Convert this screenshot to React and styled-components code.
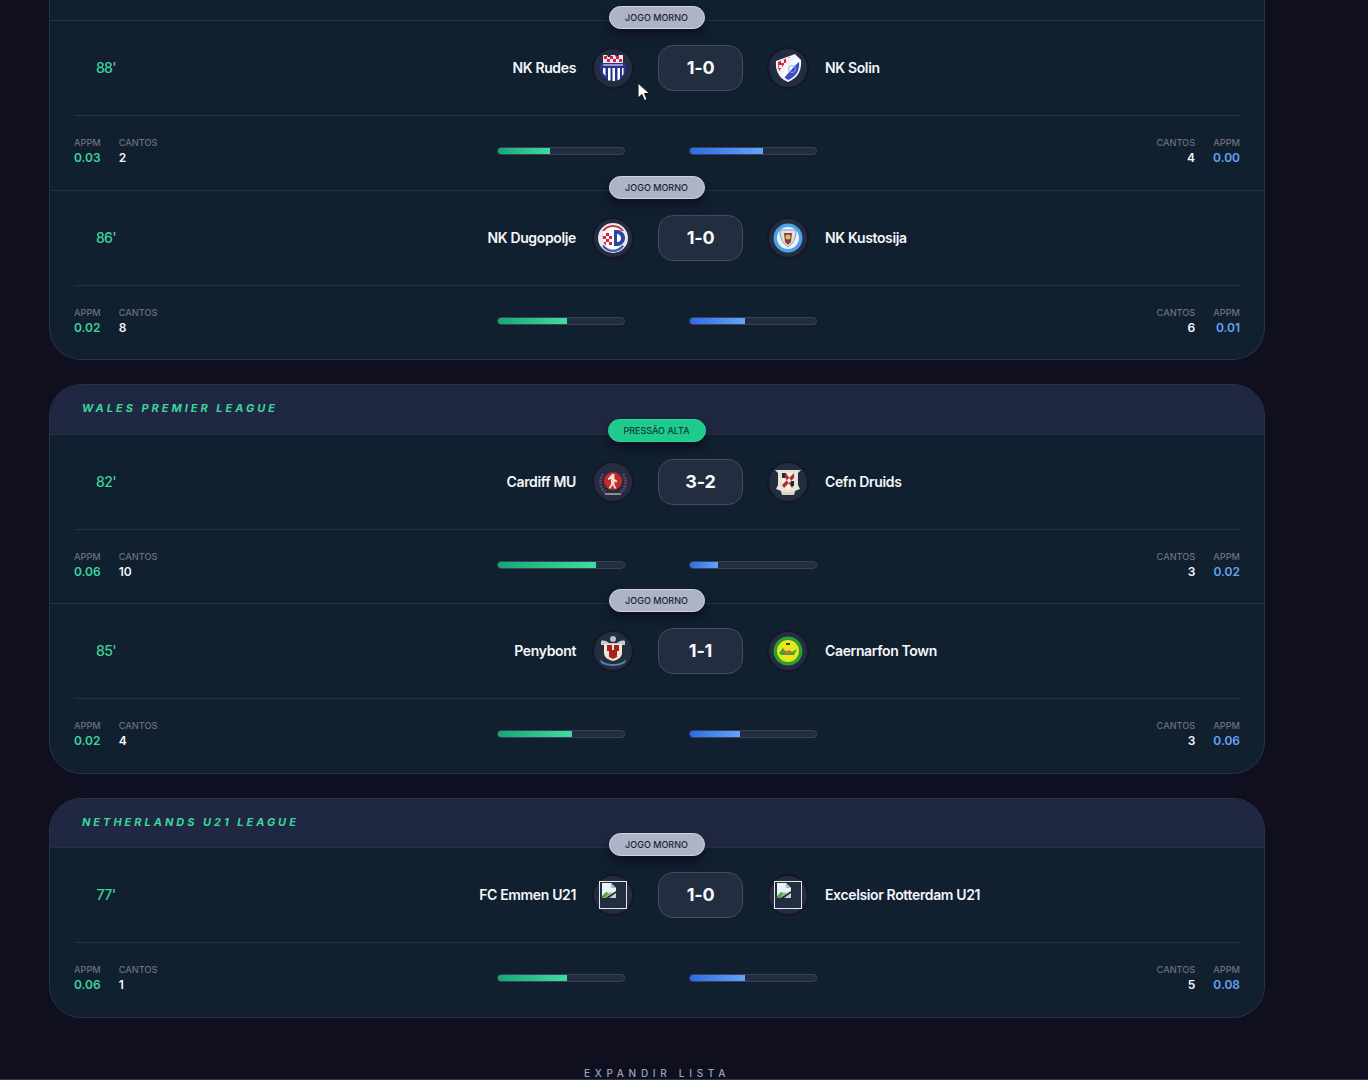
import React from "react";
import styled, { createGlobalStyle } from "styled-components";

const Global = createGlobalStyle`
  html, body { margin: 0; padding: 0; height: 1080px; overflow: hidden; background: #0f0f1f; }
  body { font-family: Inter, "Liberation Sans", sans-serif; -webkit-font-smoothing: antialiased; }
  * { box-sizing: border-box; }
`;

const Page = styled.main`
  position: relative;
  width: 1368px;
  height: 1080px;
  overflow: hidden;
  padding: 0 103px 0 49px;
  display: flex;
  flex-direction: column;
  border-bottom: 1px solid #2c3a40;
`;

const Card = styled.section`
  background: #10202f;
  border: 1px solid #2a3345;
  border-top: ${(p) => (p.$clipped ? "0" : "1px solid #2a3345")};
  border-radius: ${(p) => (p.$clipped ? "0 0 32px 32px" : "32px")};
  margin-bottom: 24px;
  padding-top: ${(p) => (p.$clipped ? "20px" : "0")};
  flex: none;
`;

const CardHeader = styled.header`
  height: ${(p) => p.$h ?? 49}px;
  padding-left: 32px;
  padding-bottom: ${(p) => (p.$h ? "2px" : "3px")};
  display: flex;
  align-items: center;
  background: #202743;
  border-radius: 31px 31px 0 0;
  font-size: 11px;
  font-weight: 700;
  font-style: italic;
  letter-spacing: 2.98px;
  color: #3ad69d;
  text-transform: uppercase;
`;

const Match = styled.article`
  position: relative;
  border-top: 1px solid #243243;
`;

const Pill = styled.span`
  position: absolute;
  top: ${(p) => (p.$hot ? "-16px" : "-15px")};
  left: 50%;
  transform: translateX(-50%);
  width: ${(p) => (p.$hot ? "98px" : "96px")};
  height: 23px;
  padding: 0 1px 1px 0;
  display: flex;
  align-items: center;
  justify-content: center;
  border-radius: 999px;
  font-size: 9px;
  font-weight: 500;
  text-transform: uppercase;
  color: ${(p) => (p.$hot ? "#0d3a3a" : "#1c2235")};
  background: ${(p) => (p.$hot ? "#1fcb8c" : "#aeb4c6")};
  border: 1px solid ${(p) => (p.$hot ? "#2bd699" : "#d0d4e0")};
  box-shadow: 0 6px 10px rgba(13, 12, 30, 0.75);
  z-index: 2;
`;

const MainRow = styled.div`
  display: grid;
  grid-template-columns: 64px 472px 85px 1fr;
  column-gap: 24px;
  align-items: center;
  margin: 0 24px;
  padding: 24px 0;
  border-bottom: 1px solid #2a3040;
`;

const Minute = styled.span`
  font-size: 14px;
  line-height: 16px;
  font-weight: 500;
  color: #3fd39b;
  text-align: center;
  letter-spacing: -0.6px;
`;

const Team = styled.div`
  display: flex;
  align-items: center;
  gap: 16px;
  justify-content: ${(p) => (p.$home ? "flex-end" : "flex-start")};
`;

const TeamName = styled.span`
  font-size: 14px;
  line-height: 16px;
  padding-bottom: 1px;
  font-weight: 600;
  color: #f4f6fa;
  letter-spacing: -0.36px;
  white-space: nowrap;
`;

const Badge = styled.span`
  width: 42px;
  height: 42px;
  flex: none;
  border-radius: 50%;
  background: #222d40;
  border: 2px solid #17152a;
  display: flex;
  align-items: center;
  justify-content: center;
`;

const Score = styled.div`
  height: 46px;
  padding-bottom: 1px;
  border-radius: 15px;
  background: #222d40;
  border: 1px solid #474a63;
  display: flex;
  align-items: center;
  justify-content: center;
  font-size: 18px;
  font-weight: 700;
  letter-spacing: -0.2px;
  color: #f6f8fb;
`;

const StatsRow = styled.div`
  display: grid;
  grid-template-columns: 1fr auto 1fr;
  align-items: start;
  height: ${(p) => p.$h ?? 73}px;
  padding: 21px 24px 0;
`;

const StatGroup = styled.div`
  display: flex;
  gap: 18px;
  justify-content: ${(p) => (p.$end ? "flex-end" : "flex-start")};
`;

const Stat = styled.div`
  display: flex;
  flex-direction: column;
  align-items: ${(p) => (p.$end ? "flex-end" : "flex-start")};
`;

const StatLabel = styled.span`
  font-size: 9.2px;
  line-height: 12px;
  margin-bottom: 1px;
  font-weight: 500;
  color: #6d6d85;
`;

const StatValue = styled.span`
  font-size: 12px;
  line-height: 16px;
  font-weight: 600;
  color: ${(p) => (p.$tone === "green" ? "#3fd39b" : p.$tone === "blue" ? "#66a3f5" : "#f4f6fa")};
`;

const Bars = styled.div`
  display: flex;
  gap: 64px;
  margin-top: 10px;
`;

const Track = styled.div`
  width: 128px;
  height: 8px;
  border-radius: 999px;
  background: #222d40;
  border: 1px solid #3a4156;
  overflow: hidden;
`;

const Fill = styled.div`
  height: 100%;
  background: ${(p) =>
    p.$side === "home"
      ? "linear-gradient(90deg, #15a874, #3fdca2)"
      : "linear-gradient(90deg, #2f6be8, #63a4f8)"};
`;

const Expand = styled.div`
  margin-top: 25px;
  text-align: center;
  font-size: 10px;
  line-height: 12px;
  font-weight: 500;
  letter-spacing: 4.72px;
  color: #97a3b8;
  text-transform: uppercase;
`;

const Cursor = styled.svg`
  position: absolute;
  left: 637px;
  top: 82px;
  z-index: 5;
`;

const Rudes = () => (
  <svg width="28" height="28" viewBox="0 0 28 28">
    <path d="M4 1h4l1 2h2l1-2h4l1 2h2l1-2h4v8H4z" fill="#e8e8ee" />
    <path d="M5 2h3v3H5zM11 2h3v3h-3zM17 2h3v3h-3zM8 5h3v3H8zM14 5h3v3h-3zM20 5h3v3h-3z" fill="#d8213a" />
    <path d="M1 9h26v6c0 6-5 11-13 12C6 26 1 21 1 15z" fill="#28318f" />
    <path d="M4 10.500h20v1H4z" fill="#fff" />
    <path d="M4 14h2.500v8L4 19zM9 14h2.500v12.500H9zM13.500 14H16v13h-2.500zM18.500 14H21v11l-2.500 1.500zM23 14h1.500v6L23 22z" fill="#fff" />
  </svg>
);

const Solin = () => (
  <svg width="30" height="30" viewBox="0 0 30 30">
    <path d="M3 8 22 1l6 6c1 10-3 18-13 22C6 26 2 17 3 8z" fill="#f2f3f8" />
    <path d="M5 9 17 4 6 18C5 15 5 12 5 9z" fill="#d8213a" />
    <path d="M8 7h3v3H8zM13 5h3v3h-3zM6 12h3v3H6zM11 10h3v3h-3z" fill="#f2f3f8" />
    <path d="M26 9c1 8-3 15-11 18-2-1-4-3-5-5z" fill="#3b4cc0" />
    <path d="M8 22 24 4l3 3L11 25z" fill="#fbfbff" />
    <circle cx="19" cy="16" r="3.500" fill="none" stroke="#8fa0f0" strokeWidth="1" />
  </svg>
);

const Dugopolje = () => (
  <svg width="32" height="32" viewBox="0 0 32 32">
    <circle cx="16" cy="16" r="15" fill="#e9e9ef" />
    <path d="M5 9a13 13 0 0 1 22 0z" fill="#c93a3a" />
    <circle cx="16" cy="16" r="11" fill="#fff" />
    <path d="M6 11h9v12H8c-2-3-3-7-2-12z" fill="#d8213a" />
    <path d="M6 11h3v3H6zM12 11h3v3h-3zM9 14h3v3H9zM6 17h3v3H6zM12 17h3v3h-3zM9 20h3v3H9z" fill="#fff" />
    <path d="M17 8h4c5 1 7 5 7 8s-2 7-7 8h-4z" fill="#2846a8" />
    <path d="M20 12h1c2 1 3 2 3 4s-1 4-3 4h-1z" fill="#fff" />
    <path d="M5 24a13 13 0 0 0 22 0l-2-1a11 11 0 0 1-18 0z" fill="#3a5fb0" />
  </svg>
);

const Kustosija = () => (
  <svg width="30" height="30" viewBox="0 0 30 30">
    <circle cx="15" cy="15" r="14.500" fill="#4da3e8" />
    <circle cx="15" cy="15" r="11" fill="#eef3fa" />
    <path d="M7 7h16c0 8-3 14-8 17C10 21 7 15 7 7z" fill="#dfe3ee" stroke="#8a93a8" strokeWidth="1" />
    <path d="M11 10h8l-1 9-3 3-3-3z" fill="#8c3a36" />
    <circle cx="15" cy="14" r="2.500" fill="#d8c25a" />
  </svg>
);

const Cardiff = () => (
  <svg width="32" height="32" viewBox="0 0 32 32">
    <path d="M6 8c-4 6-3 14 2 18M26 8c4 6 3 14-2 18" fill="none" stroke="#6b3c6d" strokeWidth="3" strokeDasharray="2 1" />
    <circle cx="16" cy="15" r="9" fill="#c62a26" />
    <path d="M15 8h2.500v5l3 2-1 1.500-2-1v3l2 4h-2l-2-3.500-2 3.500h-2l2.500-4.500v-5l-3 1v-1.500z" fill="#f0ddd0" />
    <path d="M8 27h16v2H8z" fill="#8d8a90" />
  </svg>
);

const Druids = () => (
  <svg width="30" height="30" viewBox="0 0 30 30">
    <path d="M2 3h26l-3 3v12l2 4-5 2-1 4H9l-1-4-5-2 2-4V6z" fill="#e8e4da" />
    <path d="M9 6h12v14l-6 3-6-3z" fill="#f4f1e8" />
    <path d="M9 6h4l8 12-2 3zM21 6l-12 12 2 3 10-10z" fill="#b92a2a" />
    <path d="M9 6h3v5H9zM18 14h3v5h-3z" fill="#2a2a2e" />
    <path d="M9 25h12v3H9z" fill="#d8d4c8" />
  </svg>
);

const Penybont = () => (
  <svg width="30" height="32" viewBox="0 0 30 32">
    <circle cx="15" cy="4" r="3" fill="#b8bcc8" />
    <path d="M3 6c3-1 6 0 8 2h8c2-2 5-3 8-2v4H3z" fill="#c8ccd6" />
    <path d="M6 9h18v9c0 4-4 7-9 8-5-1-9-4-9-8z" fill="#efe6d2" />
    <path d="M9 10h5v6H9zM16 10h5v6h-5zM11 15h8v7l-4 2-4-2z" fill="#a8201f" />
    <path d="M2 24c3 4 8 5 13 5s10-1 13-5l-1 4c-3 2-8 3-12 3s-9-1-12-3z" fill="#4f86a8" />
  </svg>
);

const Caernarfon = () => (
  <svg width="30" height="30" viewBox="0 0 30 30">
    <circle cx="15" cy="15" r="14.500" fill="#2f9e2e" />
    <circle cx="15" cy="15" r="11" fill="#e6e81e" />
    <path d="M6 17l4-5 3 4 3-2 3 2 5-3-3 6H8z" fill="#3fa03a" />
    <path d="M12 15h6v3h-6z" fill="#d8623a" />
    <path d="M13 7h4v2h-4z" fill="#3a3a20" />
  </svg>
);

const Broken = () => (
  <svg width="28" height="28" viewBox="0 0 28 28">
    <rect x="0.500" y="0.500" width="27" height="27" fill="none" stroke="#e6e8ee" />
    <path d="M3 2h9l5 5v3L6 17H3z" fill="#eaf1f6" />
    <path d="M12 2v5h5z" fill="#aeb9c0" />
    <path d="M3 17v-2l4-4 3 1-4 5z" fill="#5aa34a" />
    <path d="M6 17l4-5 3-1-2 3z" fill="#86bf72" />
    <path d="M17 12v5h-7z" fill="#c8d2d0" />
  </svg>
);

const matches = {
  rudes: { pill: "Jogo morno", min: "88'", home: "NK Rudes", away: "NK Solin", H: Rudes, A: Solin, score: "1-0", s: ["0.03", "2", "4", "0.00"], bars: [41, 58] },
  dugo: { pill: "Jogo morno", min: "86'", home: "NK Dugopolje", away: "NK Kustosija", H: Dugopolje, A: Kustosija, score: "1-0", s: ["0.02", "8", "6", "0.01"], bars: [55, 44] },
  cardiff: { pill: "Pressão alta", hot: true, min: "82'", home: "Cardiff MU", away: "Cefn Druids", H: Cardiff, A: Druids, score: "3-2", s: ["0.06", "10", "3", "0.02"], bars: [78, 22] },
  peny: { pill: "Jogo morno", min: "85'", home: "Penybont", away: "Caernarfon Town", H: Penybont, A: Caernarfon, score: "1-1", s: ["0.02", "4", "3", "0.06"], bars: [59, 40] },
  emmen: { pill: "Jogo morno", min: "77'", home: "FC Emmen U21", away: "Excelsior Rotterdam U21", H: Broken, A: Broken, score: "1-0", s: ["0.06", "1", "5", "0.08"], bars: [55, 44] },
};

function MatchBlock({ m, statsH }) {
  const { H, A } = m;
  return (
    <Match>
      <Pill $hot={m.hot}>{m.pill}</Pill>
      <MainRow>
        <Minute>{m.min}</Minute>
        <Team $home>
          <TeamName>{m.home}</TeamName>
          <Badge><H /></Badge>
        </Team>
        <Score>{m.score}</Score>
        <Team>
          <Badge><A /></Badge>
          <TeamName>{m.away}</TeamName>
        </Team>
      </MainRow>
      <StatsRow $h={statsH}>
        <StatGroup>
          <Stat>
            <StatLabel>APPM</StatLabel>
            <StatValue $tone="green">{m.s[0]}</StatValue>
          </Stat>
          <Stat>
            <StatLabel>CANTOS</StatLabel>
            <StatValue>{m.s[1]}</StatValue>
          </Stat>
        </StatGroup>
        <Bars>
          <Track><Fill $side="home" style={{ width: `${m.bars[0]}%` }} /></Track>
          <Track><Fill $side="away" style={{ width: `${m.bars[1]}%` }} /></Track>
        </Bars>
        <StatGroup $end>
          <Stat $end>
            <StatLabel>CANTOS</StatLabel>
            <StatValue>{m.s[2]}</StatValue>
          </Stat>
          <Stat $end>
            <StatLabel>APPM</StatLabel>
            <StatValue $tone="blue">{m.s[3]}</StatValue>
          </Stat>
        </StatGroup>
      </StatsRow>
    </Match>
  );
}

export default function App() {
  return (
    <Page>
      <Global />
      <Card $clipped>
        <MatchBlock m={matches.rudes} statsH={74} />
        <MatchBlock m={matches.dugo} />
      </Card>
      <Card>
        <CardHeader>Wales Premier League</CardHeader>
        <MatchBlock m={matches.cardiff} />
        <MatchBlock m={matches.peny} statsH={74} />
      </Card>
      <Card>
        <CardHeader $h={48}>Netherlands U21 League</CardHeader>
        <MatchBlock m={matches.emmen} statsH={74} />
      </Card>
      <Expand>Expandir lista</Expand>
      <Cursor width="14" height="20" viewBox="0 0 14 20">
        <path d="M1 1v15l4-3.500 2.500 6 2.500-1-2.500-6H12.500z" fill="#fff" stroke="#111" strokeWidth="1" />
      </Cursor>
    </Page>
  );
}
